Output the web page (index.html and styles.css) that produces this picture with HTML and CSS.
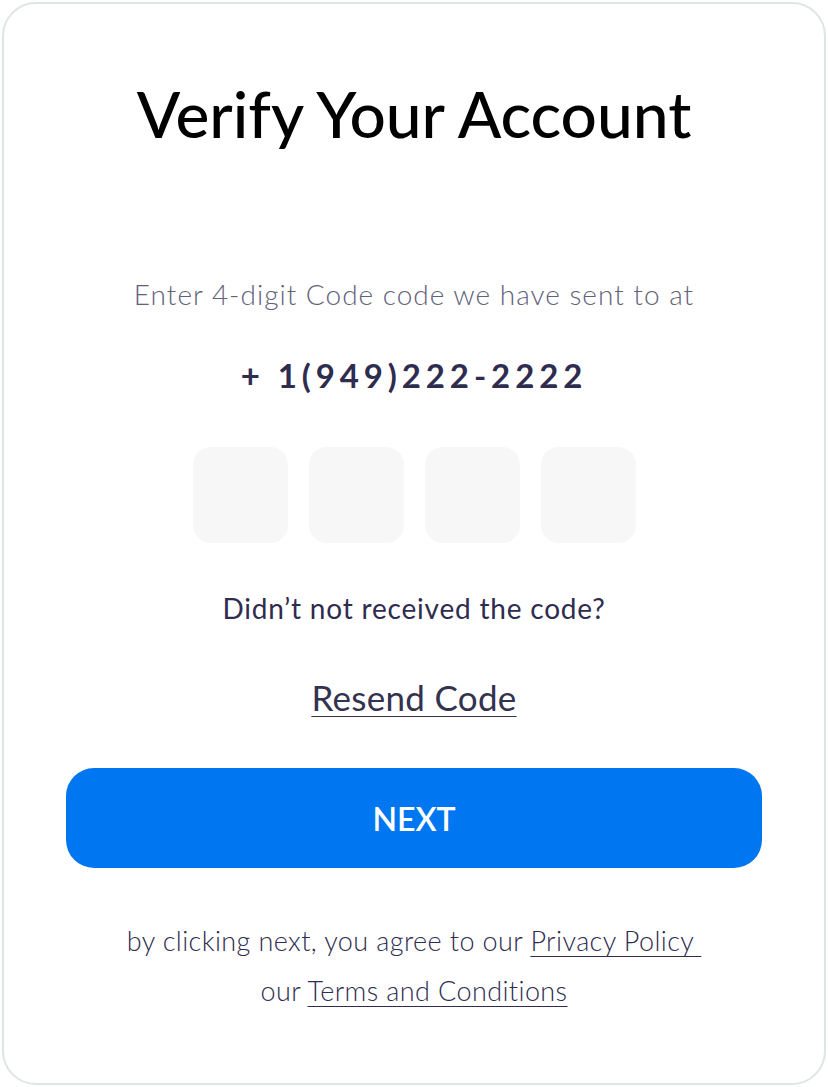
FILE: index.html
```html
<!DOCTYPE html>
<html lang="en">
<head>
<meta charset="utf-8">
<title>Verify Your Account</title>
<link rel="stylesheet" href="styles.css">
</head>
<body>
<main class="card">
  <h1 class="title">Verify Your Account</h1>
  <p class="subtitle">Enter 4-digit Code code we have sent to at</p>
  <p class="phone">+ 1(949)222-2222</p>
  <div class="code-boxes">
    <input class="code-box" type="text" maxlength="1" aria-label="Digit 1">
    <input class="code-box" type="text" maxlength="1" aria-label="Digit 2">
    <input class="code-box" type="text" maxlength="1" aria-label="Digit 3">
    <input class="code-box" type="text" maxlength="1" aria-label="Digit 4">
  </div>
  <p class="not-received">Didn’t not received the code?</p>
  <a class="resend" href="#">Resend Code</a>
  <button class="next-btn" type="button">NEXT</button>
  <p class="terms">by clicking next, you agree to our <a href="#" class="terms-link">Privacy Policy&nbsp;</a><br>our <a href="#" class="terms-link">Terms and Conditions</a></p>
</main>
</body>
</html>
```
FILE: styles.css
```css
* { box-sizing: border-box; }
html, body { margin: 0; padding: 0; background: #ffffff; }
body {
  font-family: "Lato", "Inter", "Liberation Sans", sans-serif;
  width: 828px;
  height: 1087px;
  padding: 2px;
}
.card {
  height: 1083px;
  border: 2px solid #dfe5e5;
  border-radius: 34px;
  display: flex;
  flex-direction: column;
  align-items: center;
  padding-top: 72px;
}
.title {
  margin: 0;
  font-size: 64px;
  line-height: 76px;
  font-weight: 500;
  color: #000;
}
.subtitle {
  margin: 125px 0 0;
  font-size: 28px;
  line-height: 34px;
  font-weight: 300;
  letter-spacing: 1px;
  color: #62617a;
}
.phone {
  margin: 44px 0 0;
  font-size: 33px;
  line-height: 40px;
  font-weight: 700;
  letter-spacing: 4.9px;
  color: #2e2c4f;
}
.code-boxes {
  margin-top: 52px;
  display: flex;
  gap: 21px;
}
.code-box {
  width: 95px;
  height: 96px;
  border: none;
  border-radius: 18px;
  background: #f7f7f7;
  outline: none;
}
.not-received {
  margin: 48px 0 0;
  font-size: 28px;
  line-height: 34px;
  font-weight: 400;
  letter-spacing: 0.8px;
  color: #2e2c4f;
}
.resend {
  margin-top: 52px;
  font-size: 35px;
  line-height: 40px;
  letter-spacing: 0.3px;
  color: #33324f;
  text-decoration: underline;
  text-decoration-thickness: 1px;
  text-underline-offset: 5px;
}
.next-btn {
  margin-top: 51px;
  width: 696px;
  height: 100px;
  border: none;
  border-radius: 28px;
  background: #0077f1;
  color: #fff;
  font-family: inherit;
  font-size: 32px;
  font-weight: 600;
}
.terms {
  margin: 48px 0 0;
  text-align: center;
  font-size: 27px;
  line-height: 50px;
  font-weight: 300;
  letter-spacing: 0.4px;
  color: #2e2c4f;
}
.terms-link {
  color: #2e2c4f;
  text-decoration: underline;
  text-decoration-thickness: 1px;
  text-underline-offset: 5px;
}
```
